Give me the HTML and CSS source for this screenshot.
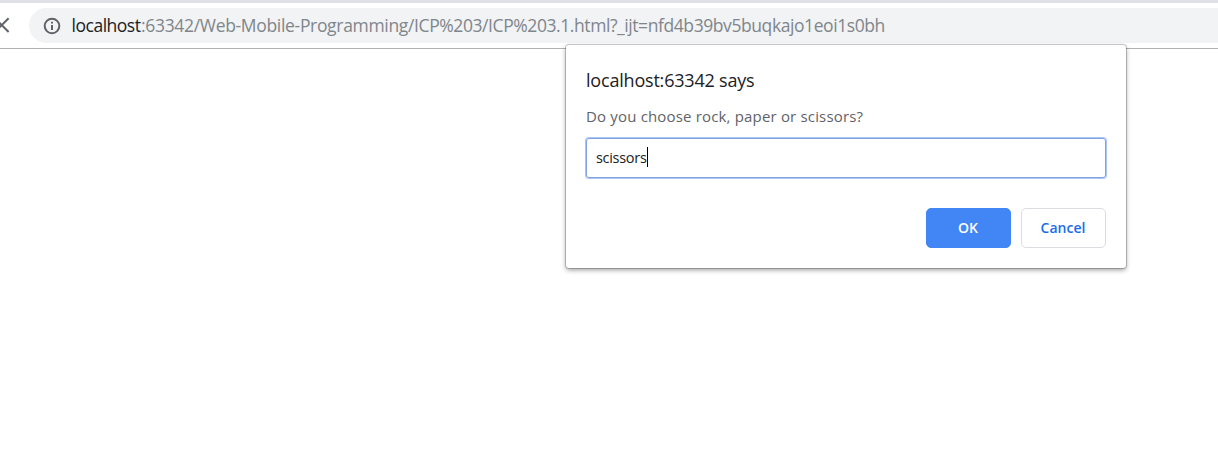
FILE: index.html
```html
<!DOCTYPE html>
<html lang="en">
<head>
<meta charset="utf-8">
<title>localhost:63342</title>
<link rel="stylesheet" href="styles.css">
</head>
<body>
<header class="toolbar">
  <svg class="stop" width="10" height="16" viewBox="0 0 10 16"><path d="M-5.2 1.2 8.6 15M8.6 1.2-5.2 15" fill="none" stroke="#5f6368" stroke-width="2"/></svg>
  <div class="omnibox">
    <svg class="info" width="18" height="18" viewBox="0 0 18 18"><circle cx="9" cy="9" r="7.3" fill="none" stroke="#5f6368" stroke-width="2"/><path d="M9 8v5M9 4.8v1.8" stroke="#5f6368" stroke-width="2"/></svg>
    <div class="url"><span class="host">localhost</span><span class="path">:63342/Web-Mobile-Programming/</span><span class="file">ICP%203/ICP%203.1.html</span><span class="query">?_ijt=nfd4b39bv5buqkajo1eoi1s0bh</span></div>
  </div>
</header>
<main class="page"></main>
<section class="dialog" role="dialog">
  <h1 class="title">localhost:63342 says</h1>
  <p class="message">Do you choose rock, paper or scissors?</p>
  <div class="field"><span class="value">scissors</span><span class="caret"></span></div>
  <div class="actions">
    <button class="btn primary">OK</button>
    <button class="btn">Cancel</button>
  </div>
</section>
</body>
</html>
```
FILE: styles.css
```css
* { box-sizing: border-box; }
body { margin: 0; height: 453px; overflow: hidden; background: #fff; font-family: "Open Sans", "Noto Sans", sans-serif; }
.toolbar { display: flex; align-items: flex-start; height: 49px; padding-top: 5px; border-top: 3px solid #dee1e6; border-bottom: 1px solid #b0b1b0; }
.stop { flex: none; margin: 9px 19px 0 0; }
.omnibox { display: flex; align-items: center; flex: 1; height: 35px; padding-left: 13.5px; background: #f1f3f4; border-radius: 18px 0 0 18px; }
.info { flex: none; margin-right: 11px; }
.url { display: flex; font-size: 17.5px; line-height: 35px; white-space: nowrap; color: #80868b; }
.host { width: 69.5px; color: #202124; letter-spacing: -0.48px; }
.path { letter-spacing: -0.32px; }
.file { letter-spacing: -0.42px; }
.query { letter-spacing: -0.42px; }
.dialog { position: absolute; left: 566px; top: 45px; width: 560px; height: 223px; padding: 22px 20px 20px; background: #fff; border-radius: 3px; box-shadow: 0 0 0 1px rgba(0,0,0,.18), 0 2px 5px rgba(0,0,0,.4); }
.title { margin: 0; font-size: 18px; line-height: 26px; font-weight: 400; letter-spacing: -0.2px; color: #202124; }
.message { margin: 12px 0 0; font-size: 15px; line-height: 22px; letter-spacing: 0.17px; color: #5f6368; }
.field { display: flex; align-items: center; height: 40px; margin-top: 11px; padding: 0 0 2px 9px; border: 1px solid #80a3df; border-radius: 3px; box-shadow: 0 0 0 1px #a9c6f7; color: #202124; }
.value { font-size: 14.5px; letter-spacing: -0.3px; }
.caret { width: 1px; height: 20px; background: #000; }
.actions { display: flex; justify-content: flex-end; gap: 10px; margin-top: 30px; }
.btn { width: 85px; height: 40px; padding: 0 1px 2px 0; border: 1px solid #dadce0; border-radius: 5px; background: #fff; color: #1a6ce8; font: 600 14px "Open Sans", sans-serif; }
.primary { background: #4285f4; border-color: #4285f4; color: #fff; }
```
